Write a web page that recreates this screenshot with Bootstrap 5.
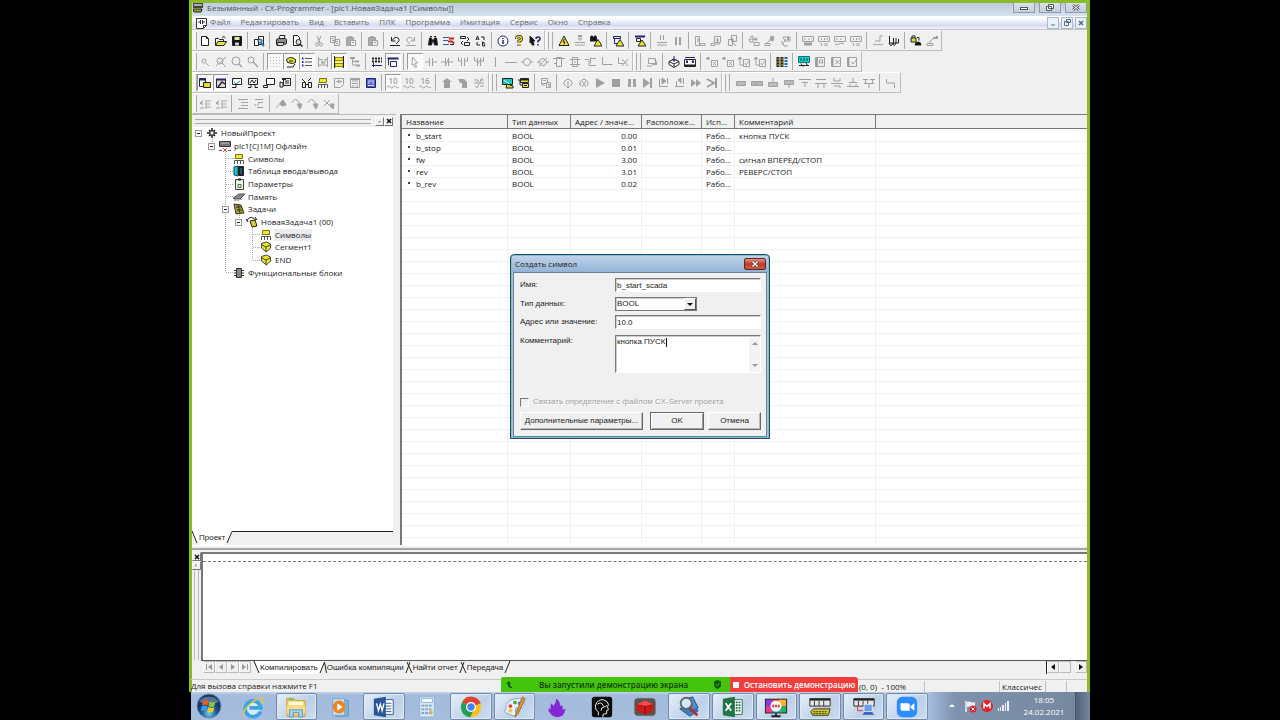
<!DOCTYPE html>
<html lang="ru">
<head>
<meta charset="utf-8">
<meta name="viewport" content="width=device-width, initial-scale=1">
<title>CX-Programmer</title>
<link href="https://cdn.jsdelivr.net/npm/bootstrap@5.3.0/dist/css/bootstrap.min.css" rel="stylesheet">
<style>
  body { background:#000; font-family:"Open Sans","Noto Sans",sans-serif; font-size:8px; line-height:12px; color:#222; overflow:hidden; }
  button, input, select, textarea { font-family:inherit; font-size:inherit; line-height:inherit; color:inherit; }
  button { padding:0; border:0; background:none; }
  svg { display:block; flex:none; }
  .desk { margin:0 190px 0 189px; min-height:100vh; }
  .app-frame { border:3px solid #8abc27; border-bottom:0; background:#f0f0f0; min-width:0; }
  .title-strip { height:13px; background:linear-gradient(#bccbe0,#d6e1ec); color:#4d5258; padding-left:1px; line-height:10px; }
  .win-btn { width:22px; height:10px; border:1px solid #8f9bad; border-top:0; background:linear-gradient(#d9e1ec,#c3cfdf); color:#444; }
  .menu-strip { height:14px; background:linear-gradient(#fff 15%,#d5d9f0 75%,#f4f5fb); color:#6a6a6a; border-bottom:1px solid #c4c4c8; line-height:11px; }
  .menu-strip a { color:inherit; text-decoration:none; }
  .menu-items { gap:10px; margin-left:3px; padding-bottom:2px; }
  .mdi-btn { width:12px; height:12px; border:1px solid #a9b9d0; background:#eaf1fb; color:#4f6f95; }
  .tool-row { height:21px; }
  .tool-band { border:1px solid #bdbdbd; border-left-color:#fff; border-top-color:#fff; padding:0 1px; height:21px; }
  .tool-band::before { content:""; width:3px; height:17px; border-left:1px solid #fff; border-right:1px solid #aaa; }
  .tool-band.later::before { width:5px; margin:0 3px 0 1px; border-left:1px solid #aaa; }
  .tool-btn { width:16px; height:17px; color:#a0a0a0; }
  .tool-btn.live { color:#222; }
  .tool-btn.down { border:1px solid #999; border-right-color:#fff; border-bottom-color:#fff; background:#f8f8f8; }
  .tool-gap { width:1px; height:17px; margin:0 3px 0 2px; background:#aaa; }
  .work { min-height:0; }
  .side { width:204px; }
  .side-grip { height:13px; padding-right:3px; border-top:1px solid #b7b7b7; }
  .grip-lines { height:5px; margin-left:3px; border-top:1px solid #aaa; border-bottom:1px solid #aaa; }
  .mini-btn { width:9px; height:9px; border:1px solid #fff; border-right-color:#777; border-bottom-color:#777; background:#f0f0f0; }
  .tree-well { background:#fff; margin-right:3px; }
  .tree-list { height:152px; margin:0; padding:0; list-style:none; position:relative; }
  .tree-list li { min-height:0; }
  .tree-list .wires { position:absolute; left:0; top:0; }
  .twig { width:14px; height:7px; flex:none; }
  .twig i { display:block; width:7px; height:7px; margin-left:3px; border:1px solid #999; background:#fff; position:relative; }
  .twig i::after { content:""; position:absolute; left:1px; right:1px; top:2px; height:1px; background:#222; }
  .node-text { margin-left:2px; padding:0 1px; white-space:nowrap; }
  .node-text.picked { background:#ececf0; }
  .in1{padding-left:13px}.in2{padding-left:27px}.in3{padding-left:40px}.in4{padding-left:54px}
  .side-tabs { height:14px; margin-right:3px; font-family:"Liberation Sans",Arial,sans-serif; }
  .side-tabs button { line-height:14px; }
  .grid-well { border-left:2px solid #777; border-top:1px solid #777; margin-left:4px; background:#fff repeating-linear-gradient(#fff 0 11px,#f0f0f0 11px 12px); background-position:0 15px; overflow:hidden; }
  .sym { width:100%; height:100%; table-layout:fixed; border-collapse:separate; border-spacing:0; }
  .sym th { height:14px; padding:1px 0 0 4px; font-weight:400; background:#f0f0f0; border-right:1px solid #777; border-bottom:1px solid #777; white-space:nowrap; line-height:12px; }
  .sym td { height:12px; padding:0 4px; border-right:1px solid #f0f0f0; white-space:nowrap; line-height:12px; }
  .sym th:last-child, .sym td:last-child { border-right:0; }
  .sym .lead-in td { height:1px; line-height:1px; background:#fff; }
  .sym .rest td { height:auto; }
  .sym .named { padding-left:14px; background:linear-gradient(#444,#444) 6px 4px / 2px 2px no-repeat; }
  .splitter { height:7px; border-top:1px solid #fff; }
  .splitter::after { content:""; display:block; height:2px; margin-top:2px; background:#a5a5a5; }
  .output { height:127px; }
  .out-rail { width:9px; }
  .out-rail .rails { width:5px; border-left:1px solid #bbb; border-right:1px solid #bbb; }
  .out-text { background:#fff; border-left:2px solid #777; border-top:2px solid #777; }
  .out-line { height:8px; border-bottom:1px dashed #777; }
  .out-tabs { height:14px; border-top:1px solid #555; margin-left:9px; font-family:"Liberation Sans",Arial,sans-serif; line-height:14px; }
  .nav-box { width:12px; height:12px; border:1px solid #bbb; border-left-color:#fff; color:#999; }
  .tab-a { background:none; height:13px; white-space:nowrap; }
  .tab-a.open-tab { background:#fff; }
  .status { height:13px; border-top:1px solid #c9c9c9; position:relative; margin-left:-1px; }
  .status .cell { border-left:1px solid #c0c0c0; height:11px; }
  .share { position:absolute; left:310px; right:229px; bottom:0; height:15px; color:#123c06; font-weight:600; z-index:2; }
  .share-go { width:229px; background:#45c40d; border-radius:2px 0 0 0; }
  .share-stop { background:#f43c3d; color:#fff; border-radius:0 3px 0 0; font-weight:600; white-space:nowrap; }
  .start-bar { height:28px; background:linear-gradient(#c5d5e9,#a3bbdc 3px,#a6bddd); margin-left:2px; }
  .orb { width:36px; }
  .pins { flex:0 1 698px; min-width:0; }
  .pin { flex:1 1 0; margin:1px 1px 0; border:1px solid transparent; border-radius:2px; min-width:0; }
  .pin.running { border-color:#7389a8; background:linear-gradient(135deg,#e6effa,#bdd0e8 60%,#cfdeef); box-shadow:inset 0 0 0 1px #dfe9f5; }
  .tray { background:linear-gradient(90deg,#a6bddd,#7f92ae 25px,#77899f); color:#fff; line-height:12px; }
  .tray-clock { width:62px; margin-left:4px; }
  .peek { width:15px; background:linear-gradient(90deg,#53637a,#75869e); border-left:1px solid #4a586c; }
  .dlg { position:absolute; left:321px; top:254px; width:260px; height:185px; z-index:3; background:#a9c4e2; border:1px solid #33424f; border-radius:4px 4px 0 0; padding:0 2px 2px; box-shadow:inset 0 0 0 1px #6cc6dc; font-family:"Liberation Sans",Arial,sans-serif; }
  .dlg-head { height:16px; background:linear-gradient(#bfd3ea,#93b3d6); margin:1px -1px 0; padding:0 2px 1px 3px; font-family:"Open Sans",sans-serif; }
  .dlg-close { width:22px; height:12px; border:1px solid #5c2722; border-radius:2px; background:linear-gradient(#dc9a8d,#bf3b2b 50%,#cc5a45); }
  .dlg-main { background:#f0f0f0; border:1px solid #6b7f95; height:165px; padding:5px 5px 0 6px; }
  .dlg-main label { width:95px; flex:none; }
  .sunk { border:1px solid #fff; border-top:1px solid #777; border-left:1px solid #777; background:#fff; border-radius:0; padding:0 1px; outline:0; box-shadow:inset 1px 1px 0 #ccc; }
  .sunk.one { height:14px; line-height:12px; }
  .pick { width:82px; appearance:none; border:1px solid #777; }
  .drop { position:absolute; right:1px; top:1px; width:12px; height:12px; background:#f0f0f0; border:1px solid #fff; border-right-color:#555; border-bottom-color:#555; pointer-events:none; }
  textarea.sunk { height:38px; resize:none; overflow:hidden; width:100%; line-height:12px; display:block; }
  .scrolls { position:absolute; right:1px; top:2px; bottom:1px; width:11px; background:#f3f3f3; color:#999; }
  .caret { position:absolute; left:51px; top:3px; width:1px; height:9px; background:#111; }
  .raised { height:18px; border:1px solid #fff; border-right:1px solid #666; border-bottom:1px solid #666; box-shadow:inset -1px -1px 0 #bbb; background:#f0f0f0; }
  .raised.main-act { border:1px solid #666; box-shadow:inset 1px 1px 0 #fff,inset -1px -1px 0 #999; }
  .dim { color:#a2a2a2; text-shadow:1px 1px 0 #fff; }
  .tick { appearance:none; width:9px; height:9px; margin:0 4px 0 0; background:#f0f0f0; border:1px solid #777; border-right-color:#fff; border-bottom-color:#fff; }
</style>
</head>
<body>
<div class="desk d-flex flex-column position-relative">
  <div class="app-frame d-flex flex-column flex-fill">
    <header>
      <div class="title-strip d-flex align-items-start">
        <svg width="10" height="10" viewBox="0 0 10 10"><path d="M0 0h10v5H0z" fill="#444"/><path d="M1 1h8v2H1z" fill="#aaa"/><path d="M0 6h9l-1 3H1z" fill="#a7a018" stroke="#222"/></svg>
        <span class="ms-1">Безымянный - CX-Programmer - [plc1.НоваяЗадача1 [Символы]]</span>
        <div class="d-flex ms-auto gap-1">
          <button class="win-btn" aria-label="Свернуть"><svg class="m-auto" width="8" height="6"><rect x=".5" y="2.5" width="7" height="2" fill="#fff" stroke="#555"/></svg></button>
          <button class="win-btn" aria-label="Восстановить"><svg class="m-auto" width="8" height="8"><path d="M2.5 .5h5v4h-5zM.5 2.5h5v4h-5z" fill="#fff" stroke="#555"/></svg></button>
          <button class="win-btn" aria-label="Закрыть"><svg class="m-auto" width="8" height="8"><path d="M1 1l6 5M7 1L1 6" stroke="#555" stroke-width="2.5"/><path d="M1 1l6 5M7 1L1 6" stroke="#fff"/></svg></button>
        </div>
      </div>
      <nav class="menu-strip d-flex align-items-center">
        <svg class="ms-1" width="11" height="12" viewBox="0 0 11 12"><path d="M.5 1.500h10v7l-3 3h-7z" fill="#fff" stroke="#333"/><path d="M2 5h2m3 0h2M4.500 3v4m2-4v4M7.500 11V8.500h3" stroke="#333" fill="none"/></svg>
        <div class="menu-items d-flex">
          <a href="#">Файл</a><a href="#">Редактировать</a><a href="#">Вид</a><a href="#">Вставить</a><a href="#">ПЛК</a><a href="#">Программа</a><a href="#">Имитация</a><a href="#">Сервис</a><a href="#">Окно</a><a href="#">Справка</a>
        </div>
        <div class="d-flex ms-auto" style="gap:2px">
          <button class="mdi-btn" aria-label="Свернуть документ"><svg class="m-auto" width="6" height="6"><path d="M1 5h4" stroke="#4f6f95"/></svg></button>
          <button class="mdi-btn" aria-label="Восстановить документ"><svg class="m-auto" width="7" height="7"><path d="M2.5 .5h4v3h-4zM.5 2.5h4v4h-4z" fill="#eaf1fb" stroke="#4f6f95"/></svg></button>
          <button class="mdi-btn" aria-label="Закрыть документ"><svg class="m-auto" width="6" height="6"><path d="M1 1l4 4M5 1L1 5" stroke="#4f6f95" stroke-width="1.5"/></svg></button>
        </div>
      </nav>
      <div id="toolbars" role="toolbar" aria-label="Панели инструментов"></div>
    </header>

    <main class="work d-flex flex-fill">
      <aside class="side d-flex flex-column flex-shrink-0">
        <div class="side-grip d-flex align-items-center">
          <div class="grip-lines flex-fill"></div>
          <button class="mini-btn ms-1" aria-label="Свернуть панель"><svg class="m-auto" width="5" height="5"><path d="M1 2h3L2.500 4z" fill="#999"/></svg></button>
          <button class="mini-btn" aria-label="Закрыть панель"><svg class="m-auto" width="6" height="6"><path d="M1 1l4 4M5 1L1 5" stroke="#111" stroke-width="1.5"/></svg></button>
        </div>
        <div class="tree-well flex-fill">
          <ul class="tree-list d-flex flex-column" id="tree"></ul>
        </div>
        <div class="side-tabs d-flex">
          <svg width="7" height="13"><path d="M0 0l5 12h2V0z" fill="#fff"/><path d="M0 0l5 12" stroke="#222"/></svg>
          <button class="bg-white">Проект</button>
          <svg width="8" height="13"><path d="M0 0h7L2 12H0z" fill="#fff"/><path d="M2 12L7 .5h1" fill="none" stroke="#222"/></svg>
          <div class="flex-fill border-top border-dark"></div>
        </div>
      </aside>
      <section class="grid-well flex-fill">
        <table class="sym">
          <colgroup><col style="width:106px"><col style="width:63px"><col style="width:71px"><col style="width:60px"><col style="width:33px"><col style="width:141px"><col></colgroup>
          <thead><tr><th>Название</th><th>Тип данных</th><th>Адрес / значе...</th><th>Расположе...</th><th>Исп...</th><th>Комментарий</th><th></th></tr></thead>
          <tbody>
            <tr class="lead-in"><td></td><td></td><td></td><td></td><td></td><td></td><td></td></tr>
            <tr><td class="named">b_start</td><td>BOOL</td><td class="text-end">0.00</td><td></td><td>Рабо...</td><td>кнопка ПУСК</td><td></td></tr>
            <tr><td class="named">b_stop</td><td>BOOL</td><td class="text-end">0.01</td><td></td><td>Рабо...</td><td></td><td></td></tr>
            <tr><td class="named">fw</td><td>BOOL</td><td class="text-end">3.00</td><td></td><td>Рабо...</td><td>сигнал ВПЕРЕД/СТОП</td><td></td></tr>
            <tr><td class="named">rev</td><td>BOOL</td><td class="text-end">3.01</td><td></td><td>Рабо...</td><td>РЕВЕРС/СТОП</td><td></td></tr>
            <tr><td class="named">b_rev</td><td>BOOL</td><td class="text-end">0.02</td><td></td><td>Рабо...</td><td></td><td></td></tr>
            <tr class="rest"><td></td><td></td><td></td><td></td><td></td><td></td><td></td></tr>
          </tbody>
        </table>
      </section>
    </main>

    <div class="splitter"></div>
    <section class="output d-flex flex-column">
      <div class="d-flex flex-fill">
        <div class="out-rail d-flex flex-column align-items-center">
          <button class="mini-btn" aria-label="Закрыть вывод"><svg class="m-auto" width="6" height="6"><path d="M1 1l4 4M5 1L1 5" stroke="#111" stroke-width="1.5"/></svg></button>
          <button class="mini-btn" aria-label="Развернуть вывод"><svg class="m-auto" width="5" height="5"><path d="M1 1l2 1.500L1 4z" fill="#999"/></svg></button>
          <div class="rails flex-fill"></div>
        </div>
        <div class="out-text flex-fill"><div class="out-line"></div></div>
      </div>
      <div class="out-tabs d-flex">
        <button class="nav-box" aria-label="В начало" style="margin-left:2px"><svg class="m-auto" width="8" height="8"><path d="M1 1v6h1V1zM7 1v6L3 4z" fill="#999"/></svg></button>
        <button class="nav-box" aria-label="Назад"><svg class="m-auto" width="8" height="8"><path d="M6 1v6L2 4z" fill="#999"/></svg></button>
        <button class="nav-box" aria-label="Вперёд"><svg class="m-auto" width="8" height="8"><path d="M2 1v6l4-3z" fill="#999"/></svg></button>
        <button class="nav-box" aria-label="В конец"><svg class="m-auto" width="8" height="8"><path d="M6 1v6h1V1zM1 1v6l4-3z" fill="#999"/></svg></button>
        <svg width="9" height="13"><path d="M3 0l5 12h1V0z" fill="#fff"/><path d="M3 0l5 12" stroke="#222"/></svg>
        <button class="tab-a open-tab">Компилировать</button>
        <svg width="9" height="13"><path d="M0 0h7L2 12H0z" fill="#fff"/><path d="M2 12L6.500 1l2 11" fill="none" stroke="#222"/></svg>
        <button class="tab-a">Ошибка компиляции</button>
        <svg width="9" height="13"><path d="M2 12L6 1M3 1l5 11" stroke="#222"/></svg>
        <button class="tab-a">Найти отчет</button>
        <svg width="9" height="13"><path d="M2 12L6 1M3 1l5 11" stroke="#222"/></svg>
        <button class="tab-a">Передача</button>
        <svg width="8" height="13"><path d="M2 12L7 0" stroke="#222"/></svg>
        <div class="ms-auto d-flex border-start border-dark">
          <button class="nav-box" aria-label="Прокрутить влево"><svg class="m-auto" width="8" height="8"><path d="M6 1v6L2 4z" fill="#111"/></svg></button>
          <div class="nav-box"></div>
          <button class="nav-box ms-1" aria-label="Прокрутить вправо"><svg class="m-auto" width="8" height="8"><path d="M2 1v6l4-3z" fill="#111"/></svg></button>
        </div>
      </div>
      <div style="height:5px"></div>
    </section>

    <footer class="status d-flex align-items-center">
      <span>Для вызова справки нажмите F1</span>
      <div class="ms-auto d-flex">
        <span class="cell border-0" style="width:65px">(0, 0)&nbsp; - 100%</span>
        <span class="cell" style="width:75px"></span>
        <span class="cell" style="width:46px;padding-left:2px">Классичес</span>
        <span class="cell" style="width:21px"></span>
        <span class="cell" style="width:21px"></span>
      </div>
      <div class="share d-flex">
        <div class="share-go d-flex align-items-center px-1">
          <svg width="9" height="9" viewBox="0 0 9 9"><path d="M1 4l3-3 2 3H5v2l2 1v1H5L3 6V4z" fill="#0d5a08"/></svg>
          <span class="m-auto">Вы запустили демонстрацию экрана</span>
          <svg class="me-1" width="9" height="9" viewBox="0 0 9 9"><path d="M4.500 0L8 1.500v3Q8 7.500 4.500 9 1 7.500 1 4.500v-3z" fill="#0d5a08"/><path d="M2.800 4.500L4 5.800l2.300-2.600" stroke="#45c40d" fill="none"/></svg>
        </div>
        <button class="share-stop flex-fill d-flex align-items-center justify-content-center gap-1"><svg width="7" height="7"><path d="M0 1h6v6H0z" fill="#fff"/></svg>Остановить демонстрацию</button>
      </div>
    </footer>
  </div>

  <div class="start-bar d-flex">
    <button class="orb" aria-label="Пуск"><svg class="m-auto" width="26" height="26" viewBox="0 0 26 26"><defs><radialGradient id="orbg" cy=".8"><stop stop-color="#6fd0f5"/><stop offset=".6" stop-color="#1f5f98"/><stop offset="1" stop-color="#123a68"/></radialGradient></defs><circle cx="13" cy="13" r="12" fill="url(#orbg)" stroke="#6c87a8"/><path d="M3 9a11 9 0 0 1 20 0q-9 3-20 0z" fill="#fff" opacity=".3"/><path d="M7 8q3-2 5.500 0l-1 4.500Q9 11 6 12.500z" fill="#ef5a28"/><path d="M13.500 8.500q3 2 6 0l-1 4.500q-3 2-6 0z" fill="#8cc63e"/><path d="M5.800 13.500q3-1.500 5.500 0l-1 4.500q-2.500-1.500-5.500 0z" fill="#39a0e5"/><path d="M12.300 14q3 2 6 0l-1 4.500q-3 2-6 0z" fill="#fdc820"/></svg></button>
    <div class="pins d-flex ms-1" id="pins"></div>
    <div class="tray d-flex flex-fill align-items-center justify-content-end">
      <svg width="8" height="6"><path d="M1 4l3-3 3 3z" fill="#fff"/></svg>
      <svg class="ms-2" width="13" height="13" viewBox="0 0 13 13"><path d="M2 1v11" stroke="#eee" stroke-width="1.5"/><path d="M3 2q2-1 4 0t4 0v5q-2 1-4 0t-4 0z" fill="#eef2f6"/><circle cx="9" cy="9" r="3.5" fill="#d8262e"/><path d="M7.500 7.500l3 3m0-3l-3 3" stroke="#fff"/></svg>
      <svg class="ms-1" width="12" height="12" viewBox="0 0 12 12"><circle cx="6" cy="6" r="6" fill="#e21f26"/><path d="M3 8.500v-5l3 3 3-3v5" fill="none" stroke="#fff" stroke-width="1.5"/></svg>
      <svg class="ms-1" width="12" height="10" viewBox="0 0 12 10"><path d="M1 7h1v3H1zM3 6h1v4H3zM5 4h2v6H5zM8 2h1v8H8zM10 0h2v10h-2z" fill="#eef3f8"/></svg>
      <div class="tray-clock text-center">18:05<br>24.02.2021</div>
    </div>
    <div class="peek"></div>
  </div>

  <form class="dlg" role="dialog" aria-labelledby="dlgName">
    <div class="dlg-head d-flex align-items-center">
      <span id="dlgName">Создать символ</span>
      <button type="button" class="dlg-close ms-auto" aria-label="Закрыть"><svg class="m-auto" width="8" height="8"><path d="M1.500 1.500l5 5m0-5l-5 5" stroke="#6b2a22" stroke-width="3"/><path d="M1.500 1.500l5 5m0-5l-5 5" stroke="#fff" stroke-width="1.5"/></svg></button>
    </div>
    <div class="dlg-main d-flex flex-column">
      <div class="d-flex align-items-center" style="margin-bottom:5px"><label for="fName">Имя:</label><input id="fName" class="sunk one flex-fill" value="b_start_scada"></div>
      <div class="d-flex align-items-center mb-1"><label for="fType">Тип данных:</label><span class="position-relative"><select id="fType" class="sunk one pick d-block"><option>BOOL</option></select><span class="drop"><svg class="m-auto" width="10" height="10"><path d="M2 4h6L5 7z" fill="#111"/></svg></span></span></div>
      <div class="d-flex align-items-center"><label for="fAddr">Адрес или значение:</label><input id="fAddr" class="sunk one flex-fill" value="10.0"></div>
      <div class="d-flex align-items-start" style="margin-top:6px"><label for="fNote">Комментарий:</label><span class="position-relative flex-fill"><textarea id="fNote" class="sunk">кнопка ПУСК</textarea><i class="caret"></i><span class="scrolls d-flex flex-column justify-content-between align-items-center py-1"><svg width="6" height="5"><path d="M0 4l3-3 3 3z" fill="#999"/></svg><svg width="6" height="5"><path d="M0 1l3 3 3-3z" fill="#999"/></svg></span></span></div>
      <div class="d-flex align-items-center dim" style="margin-top:23px"><input type="checkbox" id="fLink" class="tick" disabled><label for="fLink" class="w-auto">Связать определение с файлом CX-Server проекта</label></div>
      <div class="d-flex mt-auto" style="margin-bottom:6px">
        <button type="button" class="raised" style="width:123px">Дополнительные параметры...</button>
        <button type="button" class="raised main-act ms-auto" style="width:54px">OK</button>
        <button type="button" class="raised ms-1" style="width:53px">Отмена</button>
      </div>
    </div>
  </form>
</div>

<script>
// Toolbar glyphs on a 12 x 12 grid, stroked with the button colour.
const g = {
  blank:'<path d="M2.500 1.500h5l2 2v7h-7z" fill="#fff"/><path d="M7.500 1.500v2h2"/>',
  open:'<path d="M.5 10.500v-7h3l1 1h4v2"/><path d="M.5 10.500l2.500-4h8.500l-2.500 4z" fill="#e8e23a"/><path d="M7 2.500q2-2 3.500.5"/>',
  save:'<path d="M1.500 1.500h9v9h-9z" fill="#111"/><path d="M3.500 2h5v3h-5z" fill="#e8e8b0" stroke="none"/><path d="M4 7.500h4v3H4z" fill="#ccc" stroke="none"/>',
  cmp:'<path d="M1.500 4.500h4v6h-4zM5.500 1.500h5v8h-5z" fill="#fff"/><circle cx="7" cy="6" r="2" fill="#7bdcf0" stroke="#236"/><path d="M8 8l3 3" stroke="#2a6bd0" stroke-width="2"/>',
  print:'<path d="M4 4l1-3.500h5L9 4" fill="#fff"/><path d="M1.500 4.500l2-1h7l1 1v4l-2 1h-8z" fill="#888"/><path d="M3 7.500h6l-1 3H2z" fill="#ddd"/>',
  prev:'<path d="M2.500.5h4l2 2v8h-6z" fill="#fff"/><circle cx="7.500" cy="7" r="2.500" fill="#ddd"/><path d="M9 9l2.500 2.500" stroke-width="1.500"/>',
  cut:'<path d="M4 1l3 7M8 1L5 8"/><circle cx="4" cy="9.500" r="1.500"/><circle cx="8" cy="9.500" r="1.500"/>',
  copy:'<path d="M1.500 1.500h5v6h-5zM5.500 4.500h5v6h-5z" fill="#f0f0f0"/><path d="M3 3.500h2M3 5.500h2M7 6.500h2M7 8.500h2"/>',
  paste:'<path d="M1.500 2.500h7v8h-7z" fill="#aaa"/><path d="M3.500 1.500h3"/><path d="M5.500 5.500h5v5h-5z" fill="#f0f0f0"/><path d="M7 7.500h2"/>',
  undo:'<path d="M2.500 2v4h4M3 5.500q3-4.500 6-2.500t-2 6M1 10.500h10"/>', redo:'<path d="M9.500 2v4h-4M9 5.500Q6 1 3 3t2 6M1 10.500h10"/>',
  bino:'<path d="M2.500 3l-1 7h3l1-4h1l1 4h3l-1-7h-2l-.5 2h-2L4.500 3z" fill="#111"/><path d="M3 1.500h2M7 1.500h2"/>',
  swap:'<path d="M0 2.500h6M0 5.500h5M0 9.500h6" stroke="#35a"/><path d="M6 3.500h5M5 6.500h4l2 2" stroke="#c22" stroke-width="2"/><path d="M7 9.500h4" stroke="#226"/>',
  repl:'<path d="M1.500 1.500h5v2h-5zM5.500 7.500h5v3h-5z"/><path d="M8 2l2 2-2 2M4 6L2 8l2 2"/>',
  ab:'<path d="M1 5l1.500-4L4 5M1.500 4h2M7.500 7v4h2q1-2-.5-2 1-2-1.500-2M6 2h3v3M5 10H2V7"/>',
  info:'<circle cx="6" cy="6" r="5" fill="#fff" stroke="#227"/><path d="M6 5v4M6 3v1" stroke="#227" stroke-width="1.500"/>',
  help:'<path d="M3.500 4q0-2.500 2.500-2.500T8.500 4Q8.500 5.500 6 6v2M6 9.500V11" stroke="#222" stroke-width="3"/><path d="M3.500 4q0-2.500 2.500-2.500T8.500 4Q8.500 5.500 6 6v2M6 9.500V11" stroke="#e4dc28" stroke-width="1.500"/>',
  ptrq:'<path d="M1 1l5 5H4l1 4H3L2.500 7 1 8z" fill="#111"/><path d="M7 4q0-2 2-2t2 2Q11 5 9 6v1.500M9 9v1.500" stroke="#226" stroke-width="1.500"/>',
  warn:'<path d="M6 1l5 9.500H1z" fill="#f2e833"/><path d="M6.500 4L5 7h2L6 9.500"/>',
  dl:'<path d="M6 0v4M4 3l2 2.500L8 3M1 7.500h10M1 9.500q2 2 3 0 2 2 4 0 1 2 3 0"/><path d="M4 1h4" stroke-width="2"/>',
  bwarn:'<path d="M0 6l1-5h1.500l1 2 1-2H6l1 5z" fill="#111"/><path d="M8 4.500l4 6.500H4z" fill="#f2e833"/>',
  pwarn:'<path d="M1.500 1.500h7v2h-7zM2.500 3.500v5h3" stroke="#227"/><path d="M8 4.500l4 6.500H4z" fill="#f2e833"/>',
  lwarn:'<path d="M1 1.500h10" stroke="#227" stroke-width="2"/><path d="M2.500 3.500h4v3h-4z"/><path d="M8 5l4 6H4z" fill="#f2e833"/>',
  pz:'<path d="M4.500 0v5M7.500 0v5M1 7.500h10M1 9.500q2 2 3 0 2 2 4 0 1 2 3 0"/>', pause2:'<path d="M4 2v8M8 2v8" stroke-width="2"/>',
  docs:'<path d="M1.500 1.500h4v9h-4zM3 4h2M3 6h2M6 8.500h5v2H6z"/>', docu:'<path d="M4.500 1.500h6v6h-6zM1 8.500h4v2H1zM7.500 3v4M6 5h3M6 9h4"/>', docx:'<path d="M5.500.5h5v6h-5zM2.500 4.500h4v6h-4zM6 7l4 4M6 3l3 4"/>',
  plug:'<path d="M2 2l3-1v3l3 1M1 4h4v3H2zM6 7.500h5v3H6z"/><path d="M7 3l2 2" stroke-width="2"/>', plug2:'<path d="M7 1l3 1-1 4-3-1zM6 5L3 8M1 8.500h5v2H1z"/><path d="M8 2v3" stroke-width="2"/>', plug3:'<path d="M3 2h7v4H5zM6 4l-4 6M1 6l3 5h4"/><path d="M8 2v3" stroke-width="2"/>',
  mon:'<path d="M.5 1.500h11v5H.5zM2 4h2M6 4h2M9 4h1"/><path d="M2 9h8" stroke-width="3"/>', monb:'<path d="M.5 1.500h11v5H.5zM3.500 3v2M6.500 3v2M9 3v2M3 8l1 3M7 8v3M9 8v3"/>', monc:'<path d="M.5 1.500h11v5H.5zM2 4h2M6 4h2M1 9q2 2 4 0t5 0"/>',
  step:'<path d="M11 1H8v5H3M1 9q2 2 3 0 2 2 4 0 1 2 3 0"/>', wave:'<path d="M1.500 1v7h9V4M1 8q2 5 4 0 1 5 3 0v-5M5.500 3v5"/>',
  locky:'<path d="M1 3h5v4H1z" fill="#e4dc28"/><path d="M2 3V1h3v2M7 2.500h2v3"/><path d="M5 10q0-3 3-3t3 3z" fill="#111"/>', lockg:'<path d="M1 8.500h6v2H1zM4 8V6l3-2"/><path d="M7 3h4v-2" stroke-width="2"/>',
  mag:'<circle cx="5" cy="5" r="2"/><path d="M7 7l3 3"/>', magx:'<circle cx="5" cy="5" r="3"/><path d="M7 7l4 4M1 10L11 1"/>', magb:'<circle cx="5" cy="5" r="4"/><path d="M8 8l3 3" stroke-width="1.500"/>', magk:'<circle cx="4" cy="4" r="3"/><path d="M6 6l5 5" stroke-width="1.500"/>',
  dots:'<path d="M1 1.500h11M1 4.500h11M1 7.500h11M1 10.500h11" stroke-dasharray="1 2" stroke="#bbb"/>',
  chat:'<path d="M1.500 3.500q4-4 9 0v3l-3 1-5-1z" fill="#e8e23a"/><path d="M2 11h6l2-3M4 5h4"/>',
  list:'<path d="M4 2.500h7M4 6h7M4 9.500h7" stroke="#555"/><path d="M1 2.500h1.500M1 6h1.500M1 9.500h1.500" stroke="#22b" stroke-width="2"/>',
  rung:'<path d="M1.500 1v10M10.500 1v10M2 3.500h3v3h3v-3h3M2 9h8M4 7h4"/>',
  rungy:'<path d="M2 1.500h8v3H2zM2 7.500h8v3H2z" fill="#f1e92a" stroke="#8c8600"/><path d="M1.500 0v12M10.500 0v12"/><path d="M2 6h8" stroke="#f1e92a"/>',
  tree:'<path d="M3.500 3v6M3.500 5.500h4M3.500 9h4" /><path d="M1 2h5M6 5.500h4M7 9.500h4" stroke-width="2"/>',
  grid:'<path d="M1 2.500h10M1 5.500h10" stroke-width="2" stroke-dasharray="2 1"/><path d="M1 9.500h10M2.500 7v4" stroke="#227"/>',
  win:'<path d="M.5 2.500h11" stroke="#227" stroke-width="2"/><path d="M3.500 5.500h6v5h-6zM1.500 3v6" stroke="#227"/>',
  arrow:'<path d="M3.500 1l5 6H6l1.500 4h-2L4.500 8l-1.500 1z" fill="#fff"/>',
  no:'<path d="M0 6h4M8 6h4M4.500 2v8M7.500 2v8"/>', nc:'<path d="M0 6h4M8 6h4M4.500 2v8M7.500 2v8M4 10l4-8"/>', orno:'<path d="M1.500 1v4h3M4.500 2v8M10.500 1v4h-3M7.500 2v8"/>', ornc:'<path d="M1.500 1v4h3M4.500 2v8M10.500 1v4h-3M7.500 2v8M4 9l4-6"/>',
  vl:'<path d="M6.500 1v10"/>', hl:'<path d="M0 6.500h12"/>', coil:'<circle cx="6" cy="6" r="3.500"/><path d="M0 6h2.500M9.500 6H12"/>', ncoil:'<circle cx="6" cy="6" r="3.500"/><path d="M0 6h2.500M9.500 6H12M2 10l8-8"/>',
  fb:'<path d="M3.500 1.500h5v9h-5zM0 2.500h12M1 7.500h2.500"/>', fb2:'<path d="M3.500 1.500h5v9h-5zM1 3.500h10M1 8.500h10M5 6h2"/>', fork:'<path d="M0 3.500h4v6h2M5.500 1.500v6M5 2.500h6M6 9.500h5"/>', ell:'<path d="M1.500 1v7.500h10"/>', delx:'<path d="M1.500 1v6.500h5M5 3l6 7M11 3l-6 7"/>',
  tick:'<path d="M2.500 2.500h7v5h-7zM1 10h5M8 4l3 2-5 3"/><path d="M7 8h4" stroke-width="2"/>',
  pkg:'<path d="M6 3l5 2.500v3L6 11.500 1 8.500v-3z" fill="#fff"/><path d="M1 5.500L6 8l5-2.500M6 8v3" /><path d="M6 0v5M4 3l2 2.500L8 3" stroke="#227"/>', cal:'<path d="M.5 3.500h11v7H.5z" fill="#fff"/><path d="M1 9.500h10" stroke-width="2"/><path d="M1 1.500h10M3 4v3M9 4v3" stroke="#227"/><path d="M2 6h2M8 6h2" stroke="#227" stroke-width="2"/>',
  tx:'<path d="M5.500 4.500h6v6h-6zM7 6l3 3M10 6L7 9"/><path d="M0 3l2-2 2 2z" fill="currentColor"/>', tv:'<path d="M5.500 3.500h6v7h-6zM7 7l1 2 3-4M2 4v5h3"/><path d="M0 3l2-2 2 2z" fill="currentColor"/>',
  film:'<path d="M2 1v10M6 1v10" stroke-width="3"/><path d="M1.500 3h2M1.500 6h2M1.500 9h2M5.500 3h2M5.500 6h2M5.500 9h2" stroke="#e4dc28"/><path d="M10 1v10" stroke="#26a" stroke-width="3" stroke-dasharray="2 1"/>',
  cyan:'<path d="M.5.5h11v6H.5z" fill="#18d0c8" stroke="#08776f"/><path d="M3 2v3M6 2v3M9 2v3" stroke="#045"/><path d="M1 9.500h10M3 7.500l2 3M8 7l2 3"/>', pg:'<path d="M1.500 1.500h9v9h-9zM3.500 2v8M5.500 4h3v3h-3z"/><path d="M2.500 2v8" stroke-width="2"/>', pgx:'<path d="M1.500 1.500h9v9h-9zM5.500 4l4 4M9.500 4l-4 4"/><path d="M2.500 2v8" stroke-width="2"/>', pgv:'<path d="M1.500 1.500h9v9h-9zM5.500 6l1.500 2 3-4"/><path d="M2.500 2v8" stroke-width="2"/>',
  w1:'<path d="M.5 1.500h6v8h-6z" fill="#fff"/><path d="M4.500 5.500h7v5h-7z" fill="#e4dc28"/><path d="M1 2.500h5" stroke="#227" stroke-width="2"/>', w2:'<path d="M1.500 2.500h9v8h-9z" fill="#ddd"/><path d="M1 2.500h10" stroke="#227" stroke-width="2"/><path d="M3 10l4-5 3 2" stroke-width="1.500"/>', w3:'<path d="M1.500 1.500h9v6h-9zM1 10.500h4V8" fill="#fff"/><path d="M3 5l2 2 4-3" stroke="#17857d"/>', w4:'<path d="M1.500 1.500h9v6h-9zM1 10.500h3V8M8 8v2.500h3"/><path d="M3 6l2-3 2 3 2-3"/>', w5:'<path d="M3.500 1.500h8v6h-8zM.5 8.500h4v2h-4z" fill="#fff"/>', w6:'<path d="M4.500 1.500h7v7h-7zM6 4h4M6 6h4M1 5l3 1v4H1z"/><path d="M3 2h4" stroke-width="2"/>',
  gl:'<path d="M1 2l3 3M10 1L7 4M1.500 5.500h3v5h-3zM7.500 5.500h3v5h-3zM5 7.500h2"/>', sym:'<path d="M2.500 4.500v-3h7v4h-8" fill="#f1e92a" stroke="#77731c"/><path d="M1.500 11V7.500h9V11M4.500 8v3M7.500 8v3" stroke="#555"/>', dg:'<path d="M1.500 1.500h9v6l-3 3h-6zM3 4.500h2M7 4.500h2M5.500 3v3M7 3v3"/>', pr:'<path d="M1.500 1.500h9v9h-9zM3 4h6M3 6.500h6M3 9h2M7 9h2M1 2.500h10"/>', bl:'<path d="M1.500 1.500h9v9h-9z" fill="#5560dd" stroke="#226"/><path d="M3 4h6M3 6h2M7 6h2M3 8.500h6" stroke="#dde"/>',
  up:'<path d="M3 11V5H1l5-4 5 4H9v6z" fill="currentColor" stroke="none"/>', upx:'<path d="M5 11V6H3L1 2h6l3 3v6z" fill="currentColor" stroke="none"/>', chk:'<path d="M1 3h4v3H1M7 3h4M7 6h4M2 9l2 2 5-10M7 9h4"/>',
  sim:'<path d="M.5 1.500h10v6H.5z" fill="#18c8c0"/><path d="M2 3.500l5 3" stroke="#fff"/><path d="M5 7l6 2v2H4z" fill="#e4dc28"/>', sim2:'<path d="M2.500 1.500h8v4h-8zM4.500 6.500h6v4h-6z" fill="#e4dc28"/><path d="M3 2.500h7" stroke-width="2"/><path d="M0 3h2v5h2M6 8.500h3" stroke="#226"/>',
  xfer:'<path d="M1.500 1.500h6v5h-6zM6.500 5.500h4v5h-4zM1 8h4M3 3.500h3M8 7.500h2M8 9h2"/>',
  scan:'<path d="M3 9a4 4 0 1 1 6 0M6 4v7M4 9l2 2 2-2"/>', scanx:'<path d="M3 9a4 4 0 1 1 6 0M4 4l4 6M8 4L4 10M1 7h2"/>',
  play:'<path d="M2 1l9 5-9 5z" fill="currentColor" stroke="none"/>', stop:'<path d="M2 2h8v8H2z" fill="currentColor" stroke="none"/>', paus:'<path d="M2 2h3v8H2zM7 2h3v8H7z" fill="currentColor" stroke="none"/>', nxt:'<path d="M1 1l7 5-7 5zM8 1h2v10H8z" fill="currentColor" stroke="none"/>', inn:'<path d="M1 9.500h9M1.500 2v7M9.500 1v6M4 1l4 3-4 3z" fill="currentColor"/>', out:'<path d="M1 9.500h9M2.500 4v5M9.500 1v6M4 3l3-2v5z" fill="currentColor"/>', ff:'<path d="M1 2l5 4-5 4zM6 2l5 4-5 4z" fill="currentColor" stroke="none"/>', endd:'<path d="M1 2l7 4-7 4M10 1v10" stroke-width="2"/>',
  b1:'<path d="M1.500 4.500h9v4h-9z" fill="#bbb"/>', b2:'<path d="M.5 4.500h11v4H.5zM4 4v4M7 4v4" fill="#bbb"/>', b3:'<path d="M1.500 5.500h9v4h-9z" fill="#bbb"/><path d="M6 1v4"/>', b4:'<path d="M1.500 3.500h9v4h-9z" fill="#bbb"/><path d="M6 8v3"/>', t1:'<path d="M0 2.500h12M3 5.500h6M6 5v5"/>', t2:'<path d="M1 2.500h10M0 6.500h12M3 7v4M9 7v4"/>', t3:'<path d="M3 1v3h6V1M0 6.500h12M3 9h6v2"/>', t4:'<path d="M6 1v4M2 5.500h8M0 9.500h12M3 7v2M9 7v2"/>', t5:'<path d="M0 2.500h5M7 2.500h5M2.500 3v3M9.500 3v3M1 6.500h10M6 7v4"/>', zz:'<path d="M1.500 2v4h8v5"/>',
  ind:'<path d="M1 5h3M7 2v9M8 3h4M8 6h3M8 9h4M4 3L1 5l3 2M1 10h4"/>', lin:'<path d="M1 1.500h10M4 4.500h7M4 7.500h7M1 10.500h10"/>', lin2:'<path d="M2 1.500h8M5 4.500h5M4 8l2-3M4 9.500h6M1 6l2 2"/>',
  flag:'<path d="M1 10L8 2v6" /><path d="M5 6l3-4 3 5-4 1z" fill="currentColor"/>', flagr:'<path d="M1 5q2-5 5-3t4 8"/><path d="M6 6h5l-2 5z" fill="currentColor"/>', flagx:'<path d="M1 2l8 8M1 8l6-6"/><path d="M7 6h4l-1 5z" fill="currentColor"/>'
};
// Number-format buttons stand taller: a figure above a wavy line
const figures = { n10:'10', n10x:'10', n16:'16' };
const glyph = k => figures[k]
  ? `<svg width="14" height="15" viewBox="0 0 14 15" fill="none" stroke="currentColor"><text x="7" y="9" text-anchor="middle" font-size="8" font-weight="600" fill="currentColor" stroke="none">${figures[k]}</text><path d="M1 12q1.500-2 3 0t3 0 3 0 3 0"/></svg>`
  : `<svg width="12" height="12" viewBox="0 0 12 12" fill="none" stroke="currentColor">${g[k]}</svg>`;
// "|" separator, "/" next band, "+" enabled, "=" pressed, "*" pressed and enabled
const rows = [
  '+blank +open +save | +cmp | +print +prev | cut copy paste | paste | +undo redo | +bino +swap +repl +ab | +info +help +ptrq / +warn dl +bwarn | +pwarn | +lwarn | pz pause2 | docs docu docx | plug plug2 plug3 | mon monb monc monb | step +wave | +locky lockg',
  'mag magx magb magk | =dots *chat *list rung *rungy tree | +grid *win | =arrow no nc orno ornc vl hl coil ncoil fb fb2 fork ell delx / tick | +pkg +cal | tx tx tv tv | +film | +cyan pg pgx pgv',
  '*w1 *w2 +w3 +w4 +w5 +w6 | +gl +sym dg pr +bl | =n10 n10x n16 | up upx chk / +sim +sim2 | xfer | scan scanx play stop paus nxt inn out ff endd / b1 b2 b3 b4 t1 t2 t3 t4 t5 | zz',
  'ind ind | lin lin2 | flag flagr flagr flagx'
];
document.getElementById('toolbars').innerHTML = rows.map(r =>
  '<div class="tool-row d-flex">' + r.split(' / ').map((band, i) =>
    `<div class="tool-band d-flex align-items-center ${i ? 'later' : ''}">` + band.split(' ').map(t => {
      if (t === '|') return '<span class="tool-gap"></span>';
      const c = t[0], k = t.replace(/^[+=*]/, '');
      return `<button class="tool-btn d-flex align-items-center justify-content-center ${'+*'.includes(c) ? 'live' : ''} ${'=*'.includes(c) ? 'down' : ''}" aria-label="${k}">${glyph(k)}</button>`;
    }).join('') + '</div>').join('') + '</div>').join('');

// Project tree: depth, has branch box, icon, caption
const ti = {
  root:'<path d="M6 1v10M1 6h10M3 3l6 6M9 3l-6 6" stroke="#222" stroke-width="1.500"/><path d="M4 4h4v4H4z" fill="#eee" stroke="#222"/>',
  plc:'<path d="M.5 1.500h11v5H.5z" fill="#777" stroke="#333"/><path d="M2 3h8" stroke="#bbb"/><path d="M0 10.500h3M9 10.500h3" stroke="#555"/><path d="M4 8l4 4M8 8l-4 4" stroke="#d44"/>',
  sym:g.sym, io:'<path d="M1 2l4-1v10l-4-1z" fill="#19c4cf" stroke="#055"/><path d="M5.500 1.500h5v9h-5z" fill="#222"/><path d="M8 3v6" stroke="#28d"/>',
  par:'<path d="M2.500 1.500h8v10h-8z" fill="#f2f2e8" stroke="#444"/><path d="M5 1.500h3" stroke="#222" stroke-width="2"/><path d="M5 6.500h3v3H5z" stroke="#383"/>',
  mem:'<path d="M0 7l6-4h6l-5 5H1z" fill="#888" stroke="#555"/><path d="M2 9v1M5 9v1M8 8v1" stroke="#555"/>',
  job:'<path d="M1 1l7 1 3 8-8 1z" fill="#a9a11e" stroke="#333"/><path d="M3 4h5M4 7h5M5 2l2 8" stroke="#333"/>',
  one:'<path d="M1 5q2-5 6-3l3 2" stroke="#222"/><path d="M4 5l5-1 2 6-5 1z" fill="#d8cf2c" stroke="#222"/><path d="M0 3l2 3M9 1l2 3" stroke="#222"/>',
  seg:'<path d="M1.500 2.500l5-1.500 4 2v4l-4 4-5-4z" fill="#efe52b" stroke="#444"/><path d="M2 4l4 2 4-2M6 6v5" stroke="#444"/>',
  fb:'<path d="M3.500 1.500h5v9h-5z" fill="#888" stroke="#333"/><path d="M1 3.500h2M1 6h2M1 8.500h2M9 3.500h2M9 6h2M9 8.500h2" stroke="#333"/>'
};
const nodes = [[0,1,'root','НовыйПроект'],[1,1,'plc','plc1[CJ1M] Офлайн'],[2,0,'sym','Символы'],[2,0,'io','Таблица ввода/вывода'],[2,0,'par','Параметры'],[2,0,'mem','Память'],[2,1,'job','Задачи'],[3,1,'one','НоваяЗадача1 (00)'],[4,0,'sym','Символы',1],[4,0,'seg','Сегмент1'],[4,0,'seg','END'],[2,0,'fb','Функциональные блоки']];
document.getElementById('tree').innerHTML =
  '<svg class="wires" width="90" height="152" fill="none" stroke="#aaa" stroke-dasharray="1 1"><path d="M20.500 12v4M33.500 25v120M34 31.500h8M34 44.500h8M34 57.500h8M34 69.500h8M34 145.500h8M47.500 88v4M60.500 101v32M61 107.500h8M61 120.500h8M61 133.500h8"/></svg>' +
  nodes.map(([d, box, ic, s, sel]) => `<li class="flex-fill d-flex align-items-center position-relative in${d}"><span class="twig">${box ? '<i></i>' : ''}</span><svg width="12" height="12" viewBox="0 0 12 12" fill="none" stroke="#222">${ti[ic]}</svg><span class="node-text ${sel ? 'picked' : ''}">${s}</span></li>`).join('');

// Taskbar programs on a 26 x 26 grid
const cx = '<path d="M2 4h22v8H2z" fill="#e6e6e6" stroke="#222"/><path d="M2 4h22v2H2z" fill="#222"/><path d="M7 6v6M12 6v6M17 6v6" stroke="#333"/>';
const pins = [
  ['Internet Explorer',0,'<circle cx="13" cy="14" r="8" fill="#d8eefb"/><path d="M21 18a8.500 8.500 0 1 1 .5-4H9" fill="none" stroke="#3aa4e4" stroke-width="4"/><path d="M3 23Q1 17 11 9T24 4q0 3-2 6" fill="none" stroke="#f0c33c" stroke-width="1.500"/>'],
  ['Проводник',1,'<path d="M3 4h8l1 2h11v17H3z" fill="#eccb66" stroke="#c79f3a"/><path d="M5 7h16v4H5z" fill="#fff6cf"/><path d="M5 3h5v3H5z" fill="#8dbb5e"/><path d="M3 11h20v9H3z" fill="#f6dd8b"/><path d="M6 24v-8h14v8h-4v-5h-6v5z" fill="#9fd0ee" stroke="#5b9cc8"/>'],
  ['Проигрыватель',0,'<path d="M8 4l14 2v17H8z" fill="#7fb4dc" stroke="#5e93bd"/><path d="M5 4h13v18H5z" fill="#c4def2" stroke="#78a6ca"/><circle cx="12" cy="13" r="7" fill="#f08322"/><path d="M10 9l6 4-6 4z" fill="#fff"/>'],
  ['Word',1,'<path d="M12 5h11v16H12z" fill="#fff" stroke="#2b579a"/><path d="M15 9h6M15 12h6M15 15h6M15 18h6" stroke="#2b579a"/><path d="M2 4l13-2v22L2 22z" fill="#2b579a"/><path d="M5 9l2 8 2-7 2 7 2-8" fill="none" stroke="#fff" stroke-width="1.500"/>'],
  ['Калькулятор',0,'<path d="M5 2h16v22H5z" fill="#d5e7f6" stroke="#8fb0cd"/><path d="M7 4h12v4H7z" fill="#fff" stroke="#8fb0cd"/><path d="M7 11.500h12M7 15.500h12M7 19.500h12" stroke="#7fa4c6" stroke-width="2" stroke-dasharray="3 1"/><path d="M16 17h3v4h-3z" fill="#e7b04a"/>'],
  ['Chrome',1,'<circle cx="13" cy="13" r="11" fill="#fbc116"/><path d="M13 13L3.500 7.500A11 11 0 0 1 23.500 9z" fill="#dc4437"/><path d="M13 13L3.500 7.500A11 11 0 0 0 12 24l4-8z" fill="#1fa05a"/><circle cx="13" cy="13" r="5.500" fill="#fff"/><circle cx="13" cy="13" r="4" fill="#4385f0"/>'],
  ['Paint',1,'<path d="M3 16Q2 6 13 4t10 7q-1 4-6 3t-3 5-7 2-4-5z" fill="#e8eef4" stroke="#8ea2b5"/><circle cx="8" cy="12" r="2" fill="#d9463d"/><circle cx="13" cy="8" r="2" fill="#4ba44e"/><circle cx="18" cy="9" r="2" fill="#3b7fd0"/><circle cx="8" cy="17" r="2" fill="#eec43a"/><path d="M21 2L14 20l-1 4 3-3L24 4z" fill="#d99745" stroke="#9d672a"/>'],
  ['Пламя',0,'<path d="M11 4q5 3 4 8l2-1q2 2 1 5l4-1q-2 2-2 4-2 5-8 5-6-1-7-4-3-2-2-6l2 2q-1-4 1-7l2 3q3-3 3-8z" fill="#8426d4"/>'],
  ['Голова',0,'<rect x="2" y="2" width="22" height="22" rx="3" fill="#080808"/><path d="M9 22v-4q-4-2-3-7 2-6 8-6 5 1 6 5l-1 3 1 3-2 1v3l-4 1v3M8 10q4-3 6 1t4 0M15 13q-3 0-3 4" fill="none" stroke="#fff"/>'],
  ['Куб',0,'<rect x="1" y="3" width="24" height="20" rx="4" fill="#555" stroke="#bbb"/><path d="M4 10l9-4 9 4v7l-9 4-9-4z" fill="#d01719"/><path d="M4 10l9 2 9-2M13 12v9" stroke="#6e0a0c" fill="none"/><path d="M4 10l9-4 9 4-9 2z" fill="#f34b45"/>'],
  ['Поиск',1,'<path d="M3 15l10-5 10 7-9 6z" fill="#3e7fc1" stroke="#205382"/><path d="M7 5l10-3 6 12-8 4z" fill="#4d8fcf" stroke="#205382"/><circle cx="10" cy="9" r="6" fill="#d2ebfa" stroke="#666" stroke-width="2"/><path d="M14 14l8 8" stroke="#a33" stroke-width="3"/>'],
  ['Excel',1,'<path d="M12 5h11v16H12z" fill="#fff" stroke="#217346"/><path d="M16 8h6M16 11h6M16 14h6M16 17h6" stroke="#217346" stroke-width="2" stroke-dasharray="2 1"/><path d="M2 4l13-2v22L2 22z" fill="#217346"/><path d="M5 9l6 8M11 9l-6 8" stroke="#fff" stroke-width="2"/>'],
  ['Запись экрана',1,'<path d="M1 4h24v16H1z" fill="#222"/><path d="M2 5h8v7H2z" fill="#8b3be6"/><path d="M2 12h8v7H2z" fill="#e63b8a"/><path d="M9 5h8v7H9z" fill="#e8402a"/><path d="M16 5h8v7h-8z" fill="#f9b52a"/><path d="M16 12h8v7h-8z" fill="#28b45d"/><path d="M9 12h8v7H9z" fill="#2a9fe0"/><circle cx="13" cy="12" r="6" fill="#fff"/><path d="M9 12h8" stroke="#e33" stroke-width="3" stroke-dasharray="2 1"/><path d="M8 23h10M13 20v3" stroke="#222" stroke-width="2"/>'],
  ['CX-Programmer',1,cx+'<path d="M3 18l3-3h18l-2 7H5z" fill="#d0c81e" stroke="#333"/><path d="M6 18h15M6 20h15" stroke="#333" stroke-dasharray="2 1"/>'],
  ['CX-Server',1,cx+'<path d="M6 12v5h6" stroke="#d33" fill="none"/><path d="M13 10h9v8h-9z" fill="#6d9ae8" stroke="#eee"/><path d="M11 21l2-3h9l3 4H11z" fill="#2a62c8" stroke="#ddd"/>'],
  ['Zoom',1,'<rect x="2" y="2" width="22" height="22" rx="6" fill="#2d8cff"/><path d="M6 9h8q2 0 2 2v6H8q-2 0-2-2zM17 12l4-3v8l-4-3z" fill="#fff"/>']
];
document.getElementById('pins').innerHTML = pins.map(([n, run, s]) =>
  `<button class="pin d-flex align-items-center justify-content-center ${run ? 'running' : ''}" aria-label="${n}"><svg width="24" height="24" viewBox="0 0 26 26">${s}</svg></button>`).join('');
</script>
<script src="https://cdn.jsdelivr.net/npm/bootstrap@5.3.0/dist/js/bootstrap.bundle.min.js"></script>
</body>
</html>
